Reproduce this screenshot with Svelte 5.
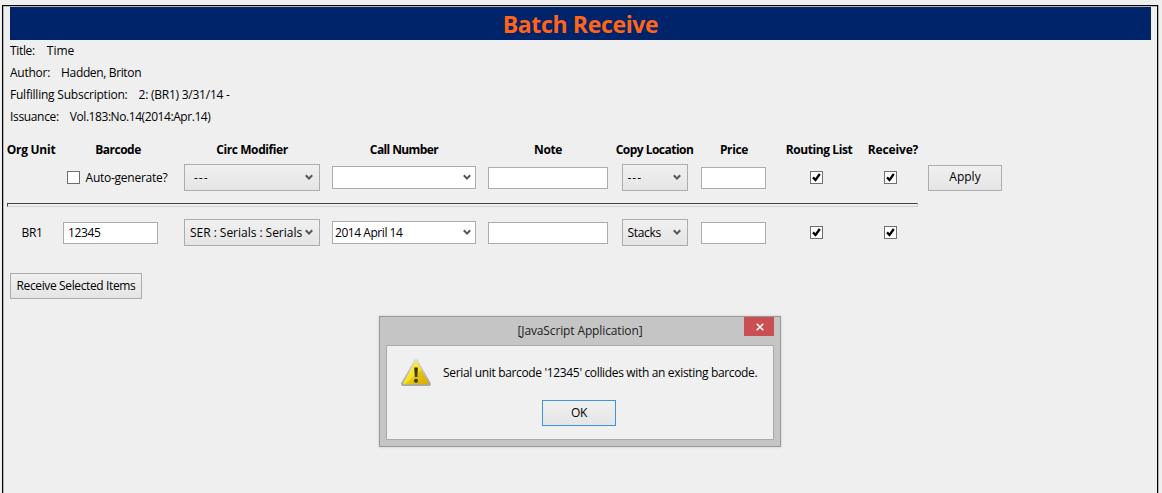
<script>
  const details = [
    ['Title:', 'Time', 's1'],
    ['Author:', 'Hadden, Briton', 's2'],
    ['Fulfilling Subscription:', '2: (BR1) 3/31/14 -', 's3'],
    ['Issuance:', 'Vol.183:No.14(2014:Apr.14)', 's4'],
  ];
  const headers = [
    ['Org Unit', 'h1'],
    ['Barcode', 'h2'],
    ['Circ Modifier', 'h3'],
    ['Call Number', 'h4'],
    ['Note', 'h5'],
    ['Copy Location', 'h6'],
    ['Price', 'h7'],
    ['Routing List', 'h8'],
    ['Receive?', 'h9'],
  ];
</script>

{#snippet chevron()}
  <svg class="chev" width="8" height="7" viewBox="0 0 8 7"><path d="M0.8 1.2 4 4.6 7.2 1.2" fill="none" stroke="#555" stroke-width="2" /></svg>
{/snippet}

{#snippet check(on)}
  <span class="check" role="checkbox" aria-checked={on} tabindex="-1">
    {#if on}<svg width="11" height="11" viewBox="0 0 11 11"><path d="M2 5.4 4.5 8 8.8 2" fill="none" stroke="#000" stroke-width="2.3" /></svg>{/if}
  </span>
{/snippet}

<div class="frame">
  <h1><span>Batch Receive</span></h1>
  <div class="details">
    {#each details as [label, value, cls]}
      <div class="detail {cls}"><span>{label}</span><span class="value">{value}</span></div>
    {/each}
  </div>

  <div class="grid heads">
    {#each headers as [text, cls]}<b class={cls}>{text}</b>{/each}
  </div>
  <div class="grid row">
    <span></span>
    <label class="auto">{@render check(false)}<span>Auto-generate?</span></label>
    <div class="select circ dashes"><span>---</span>{@render chevron()}</div>
    <div class="combo"><span></span>{@render chevron()}</div>
    <div class="input note"></div>
    <div class="select copy"><span class="dash">---</span>{@render chevron()}</div>
    <div class="input price"></div>
    <div class="tick">{@render check(true)}</div>
    <div class="tick last">{@render check(true)}</div>
    <button class="btn apply">Apply</button>
  </div>
  <div class="rule"></div>
  <div class="grid row second">
    <span class="org">BR1</span>
    <div class="input code">12345</div>
    <div class="select circ"><span class="ser">SER : Serials : Serials</span>{@render chevron()}</div>
    <div class="combo"><span>2014 April 14</span>{@render chevron()}</div>
    <div class="input note"></div>
    <div class="select copy"><span>Stacks</span>{@render chevron()}</div>
    <div class="input price"></div>
    <div class="tick">{@render check(true)}</div>
    <div class="tick last">{@render check(true)}</div>
  </div>
  <button class="btn receive">Receive Selected Items</button>
</div>

<div class="dialog" role="alertdialog">
  <div class="titlebar"><span>[JavaScript Application]</span></div>
  <button class="close" aria-label="Close"><svg width="8" height="8" viewBox="0 0 8 8"><path d="M.7.7 7.3 7.3M7.3.7.7 7.3" stroke="#fff" stroke-width="1.5" /></svg></button>
  <div class="body">
    <div class="message">
      <svg class="warning" width="32" height="30" viewBox="0 0 32 30">
        <defs>
          <linearGradient id="rim" x1="0" y1="0" x2="0" y2="1"><stop offset="0" stop-color="#d8d8d4" /><stop offset="1" stop-color="#a8a8a8" /></linearGradient>
          <linearGradient id="sun" x1="0" y1="0" x2="1" y2="1"><stop offset="0" stop-color="#fff36a" /><stop offset=".52" stop-color="#f6e21c" /><stop offset=".56" stop-color="#e5c50c" /><stop offset="1" stop-color="#d9ad00" /></linearGradient>
        </defs>
        <path d="M16 3 29 26H3Z" fill="url(#rim)" stroke="url(#rim)" stroke-width="4" stroke-linejoin="round" />
        <path d="M16 4 28 25.4H4Z" fill="url(#sun)" stroke="url(#sun)" stroke-width="1.6" stroke-linejoin="round" />
        <path d="M14.2 9.5h3.7l-.6 9.5h-2.5Z" fill="#39361c" /><circle cx="16" cy="22.7" r="2" fill="#39361c" />
      </svg>
      <span>Serial unit barcode '12345' collides with an existing barcode.</span>
    </div>
    <button class="btn ok">OK</button>
  </div>
</div>

<style>
  :global(body) { background: #efefef; overflow: hidden; }
  :global(#app) { font: 12px/22px "Open Sans", "Noto Sans", sans-serif; color: #000; letter-spacing: -0.34px; }
  .frame, .frame *, .dialog, .dialog * { box-sizing: border-box; }
  .frame { margin: 5px 4px 0 2px; height: 488px; border: 1px solid #000; border-bottom: 0; box-shadow: inset 1px 1px #b5b5b5, 1px 0 #b5b5b5; padding: 1px 0 0 4px; white-space: nowrap; }
  h1 { margin: 0 6px 0 3px; height: 33px; background: #00246a; color: #ff6419; font-size: 23px; line-height: 35px; font-weight: 700; text-align: center; }
  .details { padding: 0 3px; }
  .detail { display: flex; gap: 11px; height: 22px; }
  .s1 { gap: 12px; }
  .s1 .value { letter-spacing: 0; }
  .s2 { letter-spacing: -0.25px; }
  .s2 .value { letter-spacing: -0.36px; }
  .s3 { letter-spacing: -0.22px; }
  .s3 .value { letter-spacing: -0.24px; }
  .s4 .value { letter-spacing: -0.43px; }
  .grid { display: grid; grid-template-columns: 48px 123px 148px 156px 132px 81px 77px 94px 52px 90px; align-items: center; }
  .grid > * { justify-self: center; }
  .heads { height: 22px; margin-top: 11px; }
  .h1 { letter-spacing: -0.25px; }
  .h2 { margin-left: 3px; letter-spacing: -0.5px; }
  .h3, .h8 { letter-spacing: -0.4px; }
  .h4 { letter-spacing: -0.6px; }
  .h5 { letter-spacing: -0.4px; }
  .h6 { letter-spacing: -0.52px; }
  .h7 { margin-left: 1px; }
  .h9 { margin-left: 2px; letter-spacing: -0.15px; }
  .row { height: 27px; margin-top: 3px; }
  .check { display: flex; flex: none; width: 13px; height: 13px; border: 1px solid #6f6f6f; background: #fff; }
  .auto { display: flex; align-items: center; gap: 6px; margin-left: 1px; letter-spacing: -0.26px; }
  .tick { padding-right: 5px; }
  .tick.last { padding-right: 3px; }
  .select, .btn { border: 1px solid #acacac; background: linear-gradient(#f0f0f0, #e5e5e5); }
  .select { display: flex; align-items: center; justify-content: space-between; height: 27px; padding: 0 6px 0 5px; }
  .circ { width: 136px; }
  .dashes { padding-left: 9px; letter-spacing: 1px; }
  .dash { letter-spacing: 1px; }
  .ser { letter-spacing: -0.03px; }
  .copy { width: 66px; }
  .combo { display: flex; align-items: center; justify-content: space-between; width: 144px; height: 23px; border: 1px solid #acacac; background: #fff; padding: 0 4px 0 2px; letter-spacing: -0.45px; }
  .chev { flex: none; }
  .input { height: 22px; border: 1px solid #acacac; background: #fff; line-height: 20px; padding: 0 4px; }
  .note { width: 120px; }
  .price { width: 65px; }
  .code { width: 95px; justify-self: start; margin-left: 8px; }
  .btn { display: block; font: inherit; letter-spacing: inherit; color: #000; padding: 0 0 1px; height: 26px; line-height: 22px; text-align: center; white-space: nowrap; }
  .apply { width: 74px; justify-self: start; margin-left: 10px; letter-spacing: 0; }
  .rule { width: 911px; height: 4px; margin-top: 12px; border: 1px solid; border-color: #444 #d0d0d0 #d0d0d0 #444; }
  .second { margin-top: 12px; }
  .org { margin-left: 2px; }
  .receive { width: 132px; margin: 27px 0 0 3px; letter-spacing: -0.37px; }
  .dialog { position: absolute; left: 379px; top: 316px; width: 402px; height: 131px; border: 1px solid #989898; background: #c5c5c5; padding: 0 6px 6px; white-space: nowrap; display: flex; flex-direction: column; box-shadow: 0 0 3px #0002; }
  .titlebar { height: 28px; line-height: 28px; text-align: center; color: #222; letter-spacing: -0.13px; }
  .close { position: absolute; right: 6px; top: 0; width: 30px; height: 19px; border: 0; padding: 0 0 0 2px; background: #c94f52; display: flex; align-items: center; justify-content: center; }
  .body { flex: 1; border: 1px solid #a9a9a9; background: #f0f0f0; padding: 11px 13px 0; }
  .message { display: flex; align-items: center; height: 32px; gap: 11px; }
  .warning { flex: none; }
  .ok { width: 74px; margin: 11px 0 0 142px; border-color: #3f93e0; }
</style>
